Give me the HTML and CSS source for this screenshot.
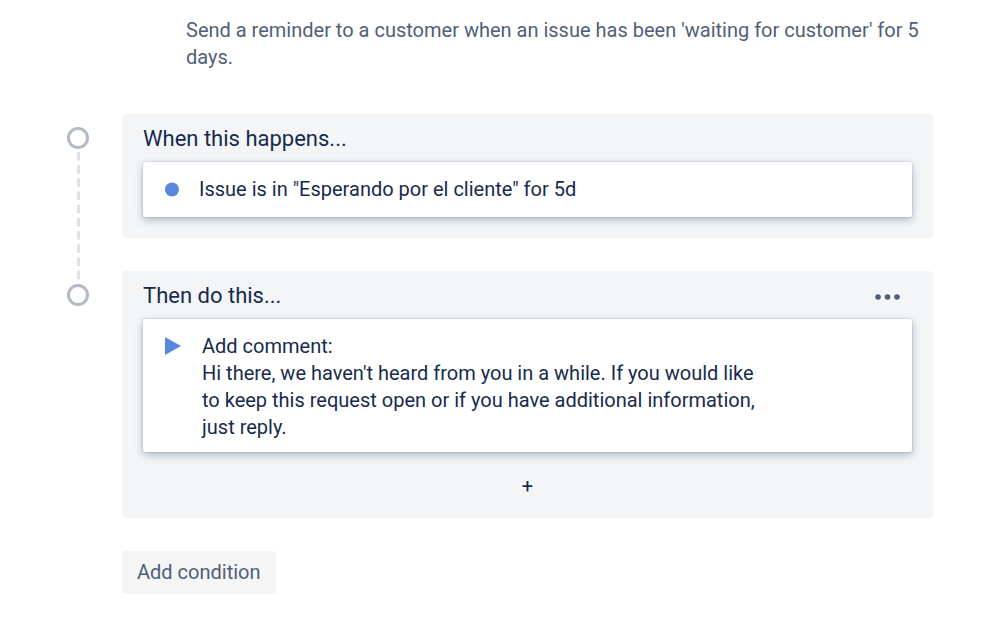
FILE: index.html
```html
<!DOCTYPE html>
<html lang="en">
<head>
	<meta charset="UTF-8">
	<meta name="viewport" content="width=device-width, initial-scale=1">
	<title>Automation rule</title>
	<link rel="stylesheet" href="styles.css">
</head>
<body>
	<main class="rule">
		<p class="description">Send a reminder to a customer when an issue has been 'waiting for customer' for 5 days.</p>

		<section class="step">
			<div class="track">
				<span class="node"></span>
				<span class="line"></span>
			</div>
			<div class="panel">
				<div class="panelHeader">
					<h2 class="title">When this happens...</h2>
				</div>
				<div class="card">
					<svg class="icon" viewBox="0 0 18 18" aria-hidden="true"><circle cx="8" cy="9.500" r="7"/></svg>
					<p class="trigger">Issue is in "Esperando por el cliente" for 5d</p>
				</div>
			</div>
		</section>

		<section class="step">
			<div class="track">
				<span class="node"></span>
			</div>
			<div class="panel">
				<div class="panelHeader">
					<h2 class="title">Then do this...</h2>
					<button class="more" type="button" aria-label="More">
						<svg width="26" height="6" viewBox="0 0 26 6" aria-hidden="true">
							<circle cx="3" cy="3" r="2.800"/>
							<circle cx="12.500" cy="3" r="2.800"/>
							<circle cx="22" cy="3" r="2.800"/>
						</svg>
					</button>
				</div>
				<div class="card">
					<svg class="icon" viewBox="0 0 18 18" aria-hidden="true"><path d="M1 0L17 9L1 18Z"/></svg>
					<div class="action">
						<p>Add comment:</p>
						<p>Hi there, we haven't heard from you in a while. If you would like to keep this request open or if you have additional information, just reply.</p>
					</div>
				</div>
				<button class="addAction" type="button">+</button>
			</div>
		</section>

		<button class="addCondition" type="button">Add condition</button>
	</main>
</body>
</html>
```
FILE: styles.css
```css
* {
	box-sizing: border-box;
	margin: 0;
	padding: 0;
}

body {
	background-color: #fff;
	color: #172b4d;
	font-family: Roboto, "Liberation Sans", sans-serif;
	font-size: 20px;
	line-height: 27px;
}

button {
	border: none;
	background: none;
	color: inherit;
	font: inherit;
	cursor: pointer;
}

.rule {
	padding: 17px 66px 35px 67px;
}

.description {
	margin: 0 0 43px 119px;
	color: #505f79;
}

/* timeline */
.step {
	display: flex;
	gap: 33px;
}

.track {
	display: flex;
	flex-direction: column;
	align-items: center;
	width: 22px;
	padding-top: 13px;
}

.node {
	width: 22px;
	height: 22px;
	border: 3px solid #b3bac5;
	border-radius: 50%;
}

/* runs on to the next node, ten dashes */
.line {
	flex: 1;
	width: 3px;
	margin: 3px 0 -13px;
	background: linear-gradient(#dfe1e6 65%, transparent 65%) 0 0 / 100% 10%;
}

.panel {
	flex: 1;
	margin-bottom: 33px;
	padding: 11px 21px 21px;
	border-radius: 4px;
	background-color: #f4f5f7;
}

.panelHeader {
	display: flex;
	align-items: center;
	justify-content: space-between;
	margin-bottom: 10px;
}

.title {
	font-size: 22px;
	font-weight: 400;
	line-height: 27px;
}

.more {
	display: flex;
	padding: 6px 11px 3px;
	fill: #505f79;
}

.card {
	display: flex;
	padding: 14px 21px;
	border-radius: 2px;
	background-color: #fff;
	box-shadow: 0 3px 8px rgba(23, 43, 77, 0.3), 0 0 2px rgba(80, 95, 150, 0.35);
}

.icon {
	flex: none;
	width: 18px;
	height: 18px;
	margin-top: 4px;
	fill: #5a87de;
}

.trigger {
	margin-left: 17px;
}

.action {
	max-width: 560px;
	margin: 0 0 -3px 20px;
}

.addAction {
	display: block;
	margin: 24px auto 0;
	padding: 0 10px;
	line-height: 21px;
}

.addCondition {
	height: 43px;
	margin-left: 55px;
	padding: 0 15px;
	border-radius: 4px;
	background-color: #f5f5f5;
	color: #505f79;
}
```
